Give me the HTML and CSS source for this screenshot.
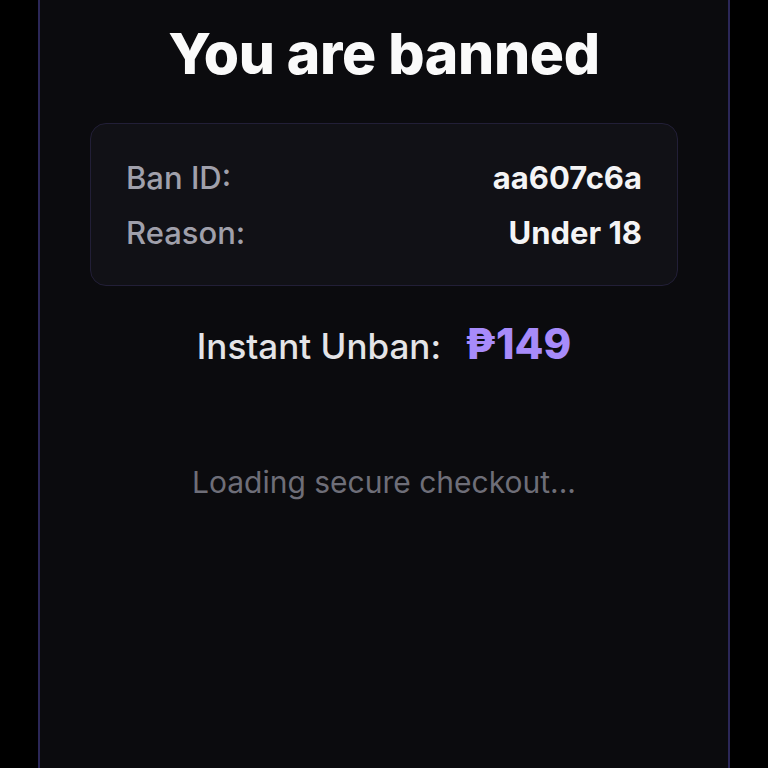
FILE: index.html
```html
<!DOCTYPE html>
<html lang="en">
<head>
<meta charset="utf-8">
<title>You are banned</title>
<link rel="stylesheet" href="styles.css">
</head>
<body>
<main class="panel">
  <h1 class="title">You are banned</h1>
  <section class="card">
    <div class="row"><span class="label">Ban ID:</span><span class="value">aa607c6a</span></div>
    <div class="row"><span class="label">Reason:</span><span class="value">Under 18</span></div>
  </section>
  <p class="unban"><span class="unban-label">Instant Unban:</span><span class="price">₱149</span></p>
  <p class="loading">Loading secure checkout...</p>
</main>
</body>
</html>
```
FILE: styles.css
```css
html, body {
  margin: 0;
  padding: 0;
  background: #000;
  height: 100%;
}
body {
  font-family: Inter, "Noto Sans", sans-serif;
  overflow: hidden;
}
.panel {
  box-sizing: border-box;
  width: 692px;
  min-height: 100vh;
  margin: 0 0 0 38px;
  padding: 20px 50px 0;
  background: #0b0b0e;
  border-left: 2px solid #2b2757;
  border-right: 2px solid #2b2757;
  display: flex;
  flex-direction: column;
  align-items: center;
}
.title {
  margin: 0;
  font-size: 57px;
  font-weight: 800;
  line-height: 68px;
  color: #fafafa;
  letter-spacing: -0.3px;
}
.card {
  box-sizing: border-box;
  align-self: stretch;
  margin-top: 35px;
  height: 163px;
  padding: 36px 35px 0;
  background: #111116;
  border: 1px solid #221f37;
  border-radius: 16px;
  display: flex;
  flex-direction: column;
  gap: 19px;
}
.row {
  display: flex;
  justify-content: space-between;
  align-items: baseline;
  font-size: 31px;
  line-height: 36px;
}
.label {
  color: #a0a0ab;
  font-weight: 500;
}
.value {
  color: #f4f4f5;
  font-weight: 700;
}
.unban {
  margin: 36px 0 0;
  display: flex;
  align-items: baseline;
  gap: 24px;
  font-size: 35px;
  line-height: 44px;
}
.unban-label {
  color: #e4e4e7;
  font-weight: 500;
}
.price {
  color: #a78bfa;
  font-weight: 800;
  font-size: 42px;
}
.loading {
  margin: 96px 0 0;
  color: #6e6e78;
  font-size: 30px;
  line-height: 36px;
}
```
